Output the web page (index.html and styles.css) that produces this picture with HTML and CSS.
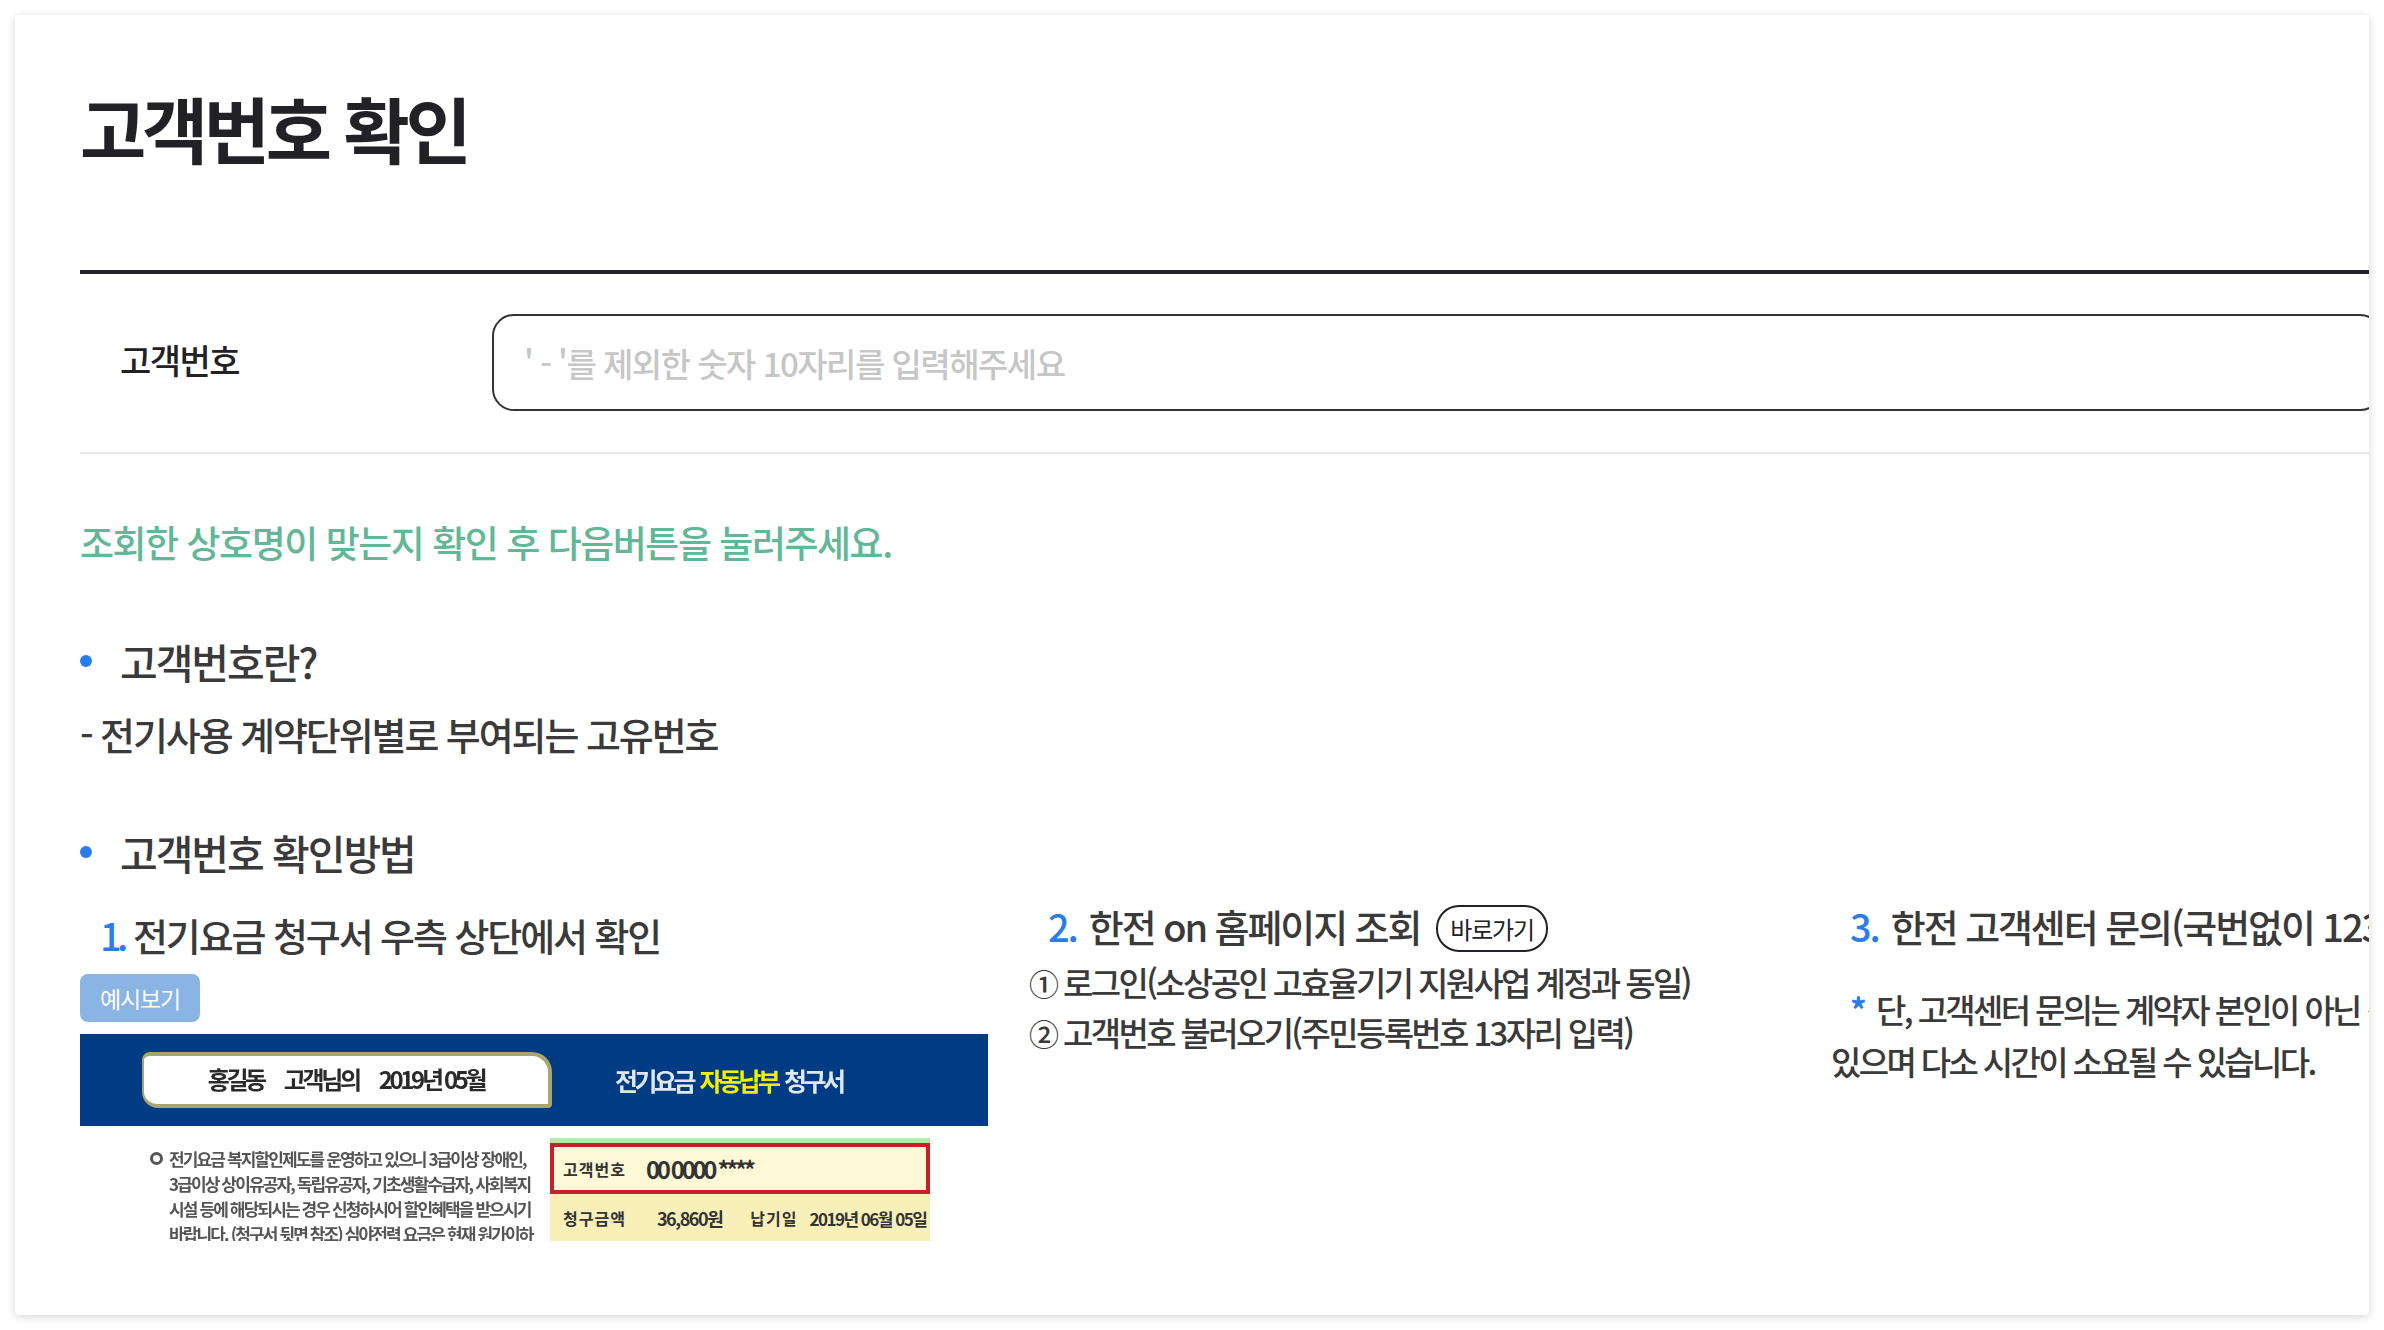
FILE: index.html
```html
<!DOCTYPE html>
<html lang="ko">
<head>
    <meta charset="UTF-8">
    <title>고객번호 확인</title>
    <link rel="stylesheet" href="styles.css">
</head>
<body>
    <div class="card">
        <div class="head">
            <h1>고객번호 확인</h1>
        </div>

        <div class="field">
            <label for="custNo">고객번호</label>
            <input type="text" id="custNo" placeholder="' - '를 제외한 숫자 10자리를 입력해주세요">
        </div>

        <p class="notice">조회한 상호명이 맞는지 확인 후 다음버튼을 눌러주세요.</p>

        <h2 class="bullet">고객번호란?</h2>
        <p class="desc">- 전기사용 계약단위별로 부여되는 고유번호</p>

        <h2 class="bullet second">고객번호 확인방법</h2>

        <div class="methods">
            <div class="method first">
                <h3 class="step"><span class="num">1.</span>전기요금 청구서 우측 상단에서 확인</h3>
                <button class="sample-btn">예시보기</button>
                <div class="bill">
                    <div class="bill-top">
                        <div class="bill-name"><span>홍길동</span><span>고객님의</span><span>2019년 05월</span></div>
                        <div class="bill-title">전기요금 <em>자동납부</em> 청구서</div>
                    </div>
                    <div class="bill-body">
                        <div class="bill-text">
                            <p><i class="bill-mark"></i>전기요금 복지할인제도를 운영하고 있으니 3급이상 장애인,</p>
                            <p>3급이상 상이유공자, 독립유공자, 기초생활수급자, 사회복지</p>
                            <p>시설 등에 해당되시는 경우 신청하시어 할인혜택을 받으시기</p>
                            <p>바랍니다. (청구서 뒷면 참조) 심야전력 요금은 현재 원가이하</p>
                        </div>
                        <div class="bill-table">
                            <div class="bill-row-no"><b>고객번호</b><span>00 0000 ****</span></div>
                            <div class="bill-row-sum"><b>청구금액</b><span>36,860원</span><b>납기일</b><span>2019년 06월 05일</span></div>
                        </div>
                    </div>
                </div>
            </div>

            <div class="method mid">
                <h3 class="step indent"><span class="num">2.</span>한전 on 홈페이지 조회<a class="go-link">바로가기</a></h3>
                <p class="sub"><span class="circle">①</span>로그인(소상공인 고효율기기 지원사업 계정과 동일)</p>
                <p class="sub"><span class="circle">②</span>고객번호 불러오기(주민등록번호 13자리 입력)</p>
            </div>

            <div class="method last">
                <h3 class="step indent"><span class="num">3.</span>한전 고객센터 문의(국번없이 123)</h3>
                <p class="sub note"><span class="star">*</span>단, 고객센터 문의는 계약자 본인이 아닌 경우 제한이</p>
                <p class="sub">있으며 다소 시간이 소요될 수 있습니다.</p>
            </div>
        </div>
    </div>
</body>
</html>
```

FILE: styles.css
```css
* {
    margin: 0;
    padding: 0;
    box-sizing: border-box;
    font-family: "Noto Sans CJK KR", "Noto Sans", sans-serif;
}

html, body {
    height: 100%;
    overflow: hidden;
}

body {
    background: #ffffff;
    padding: 15px;
    color: #3a3a3a;
}

.card {
    width: 2354px;
    height: 1300px;
    padding-left: 65px;
    background: #ffffff;
    border-radius: 4px;
    box-shadow: 0 2px 9px rgba(0, 0, 0, 0.16);
    overflow: hidden;
}

.head {
    height: 259px;
    padding-top: 76px;
    border-bottom: 4px solid #222226;
}

h1 {
    font-size: 72px;
    line-height: 72px;
    font-weight: 700;
    letter-spacing: -0.06em;
    color: #222226;
}

.field {
    display: flex;
    align-items: center;
    padding: 40px 0 41px 40px;
    border-bottom: 2px solid #e8e8e8;
}

.field label {
    width: 372px;
    flex: none;
    padding-bottom: 6px;
    font-size: 34px;
    font-weight: 500;
    letter-spacing: -0.045em;
    color: #222226;
}

.field input {
    flex: none;
    width: 1890px;
    height: 97px;
    padding: 0 30px;
    border: 2.5px solid #333333;
    border-radius: 22px;
    background: #ffffff;
    font-size: 33px;
    font-weight: 500;
    letter-spacing: -0.046em;
    outline: none;
}

.field input::placeholder {
    color: #c6c6c6;
}

.notice {
    margin-top: 61px;
    font-size: 37px;
    line-height: 54px;
    font-weight: 500;
    letter-spacing: -0.04em;
    color: #62b797;
}

.bullet {
    position: relative;
    margin-top: 65px;
    padding-left: 40px;
    font-size: 41px;
    line-height: 54px;
    font-weight: 500;
    letter-spacing: -0.05em;
}

.bullet::before {
    content: '';
    position: absolute;
    left: 0;
    top: 21px;
    width: 12px;
    height: 12px;
    border-radius: 50%;
    background: #2a7de8;
}

.bullet.second {
    margin-top: 64px;
}

.desc {
    margin-top: 19px;
    font-size: 38px;
    line-height: 54px;
    font-weight: 500;
    letter-spacing: -0.055em;
}

.methods {
    display: grid;
    grid-template-columns: 908px 761px 800px;
    column-gap: 41px;
    margin-top: 28px;
    white-space: nowrap;
}

.step {
    font-size: 38px;
    line-height: 56px;
    font-weight: 500;
    letter-spacing: -0.055em;
}

.num {
    margin-right: 12px;
    color: #2a7de8;
    font-weight: 500;
}

.method.first .num {
    margin-right: 9px;
    letter-spacing: -0.12em;
}

.method.first .step {
    padding-left: 20px;
}

.step.indent {
    display: flex;
    align-items: center;
    padding-left: 19px;
}

.method.mid, .method.last {
    margin-top: -9px;
}

.go-link {
    margin: 5px 0 0 16px;
    padding: 0 12px;
    height: 47px;
    line-height: 43px;
    border: 2px solid #222226;
    border-radius: 23px;
    font-size: 24px;
    font-weight: 400;
    letter-spacing: -0.05em;
    color: #222226;
}

.sample-btn {
    display: block;
    width: 120px;
    height: 48px;
    margin-top: 11px;
    border: none;
    border-radius: 8px;
    background: #8ab4e4;
    color: #ffffff;
    font-size: 23px;
    letter-spacing: -0.05em;
}

.sub {
    font-size: 33px;
    line-height: 49px;
    font-weight: 500;
    letter-spacing: -0.08em;
}

.circle {
    display: inline-block;
    width: 34px;
    font-size: 30px;
    letter-spacing: 0;
}

.method.mid .sub:first-of-type {
    margin-top: 4px;
}

.method.last .note {
    margin-top: 29px;
    padding-left: 19px;
}

.method.last .sub {
    line-height: 52px;
}

.star {
    margin-right: 12px;
    color: #2a7de8;
    font-weight: 700;
}

/* bill sample, stands in for the scanned picture */
.bill {
    width: 908px;
    height: 207px;
    margin-top: 12px;
    overflow: hidden;
}

.bill-top {
    display: flex;
    align-items: center;
    height: 92px;
    padding-left: 62px;
    background: #003b84;
    filter: blur(0.6px);
}

.bill-name {
    display: flex;
    justify-content: center;
    gap: 20px;
    width: 410px;
    height: 56px;
    line-height: 46px;
    border: 4px solid #a9a56e;
    border-left-width: 2px;
    border-radius: 8px 20px 4px 16px;
    background: #ffffff;
    font-size: 24px;
    font-weight: 700;
    letter-spacing: -0.14em;
    color: #2a2a2a;
}

.bill-title {
    margin-left: 63px;
    font-size: 25px;
    font-weight: 700;
    letter-spacing: -0.14em;
    word-spacing: 3px;
    color: #dfe7f2;
}

.bill-title em {
    font-style: normal;
    color: #f4f000;
}

.bill-body {
    display: flex;
    padding: 12px 0 0 69px;
    filter: blur(0.6px);
}

.bill-text {
    position: relative;
    width: 401px;
    flex: none;
    padding: 8px 0 0 20px;
    font-size: 17px;
    font-weight: 700;
    line-height: 25px;
    letter-spacing: -0.11em;
    color: #555555;
    overflow: hidden;
}

.bill-mark {
    position: absolute;
    left: 1px;
    top: 14px;
    width: 13px;
    height: 13px;
    border: 3px solid #555555;
    border-radius: 50%;
}

.bill-table {
    width: 380px;
    flex: none;
    border-top: 5px solid #b9e9a6;
    color: #333333;
}

.bill-table div {
    display: flex;
    align-items: center;
}

.bill-table b {
    font-size: 16px;
    letter-spacing: 1px;
}

.bill-row-no {
    height: 51px;
    gap: 20px;
    padding-left: 9px;
    border: 4px solid #c8202a;
    background: #fdf8d6;
}

.bill-row-no span {
    font-size: 24px;
    font-weight: 700;
    letter-spacing: -0.14em;
}

.bill-row-sum {
    height: 48px;
    padding-left: 13px;
    background: #f8f0b8;
}

.bill-row-sum span {
    margin: 0 28px 0 31px;
    font-size: 18px;
    font-weight: 700;
    letter-spacing: -0.08em;
}

.bill-row-sum span:last-child {
    margin: 0 0 0 12px;
    font-size: 17px;
    letter-spacing: -0.09em;
}
```
